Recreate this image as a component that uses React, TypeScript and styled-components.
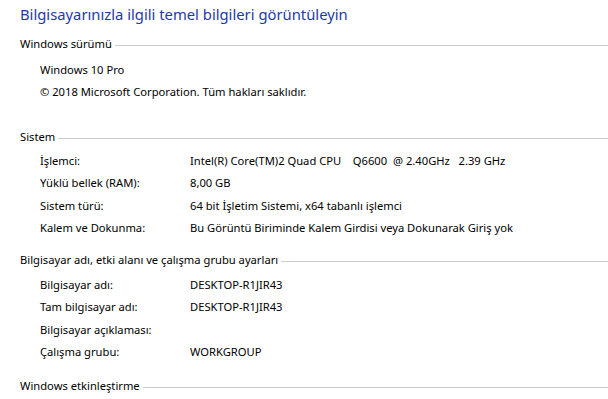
import React from "react";
import styled, { createGlobalStyle } from "styled-components";

const Global = createGlobalStyle`
  html, body { margin: 0; padding: 0; background: #ffffff; }
  body { font-family: "Noto Sans", "Open Sans", sans-serif; }
`;

const Page = styled.div`
  width: 608px;
  height: 399px;
  overflow: hidden;
  box-sizing: border-box;
  padding: 4px 0 0 20px;
  background: #fff;
  color: #000;
  font-family: "Noto Sans", sans-serif;
  font-size: 11.2px;
`;

const Title = styled.h1`
  margin: 0;
  height: 20px;
  line-height: 20px;
  font-size: 14.8px;
  font-weight: 400;
  color: #1e3aa8;
  white-space: nowrap;
`;

const Section = styled.section<{ $top: number }>`
  margin-top: ${(p) => p.$top}px;
`;

const Header = styled.div`
  display: flex;
  align-items: center;
  gap: 3px;
  height: 20px;
  line-height: 20px;
  white-space: nowrap;
`;

const Rule = styled.div`
  flex: 1;
  height: 1px;
  margin-top: 2px;
  background: #cccccc;
`;

const Rows = styled.div<{ $top: number }>`
  margin-top: ${(p) => p.$top}px;
  padding-left: 20px;
  display: grid;
  grid-template-columns: 150px 1fr;
  grid-auto-rows: 22.5px;
  align-items: center;
  white-space: pre;
`;

const Single = styled.div`
  grid-column: 1 / span 2;
`;

const Label = styled.div``;
const Value = styled.div``;

type Row = [string, string];

const system: Row[] = [
  ["İşlemci:", "Intel(R) Core(TM)2 Quad CPU    Q6600  @ 2.40GHz   2.39 GHz"],
  ["Yüklü bellek (RAM):", "8,00 GB"],
  ["Sistem türü:", "64 bit İşletim Sistemi, x64 tabanlı işlemci"],
  ["Kalem ve Dokunma:", "Bu Görüntü Biriminde Kalem Girdisi veya Dokunarak Giriş yok"],
];

const computer: Row[] = [
  ["Bilgisayar adı:", "DESKTOP-R1JIR43"],
  ["Tam bilgisayar adı:", "DESKTOP-R1JIR43"],
  ["Bilgisayar açıklaması:", ""],
  ["Çalışma grubu:", "WORKGROUP"],
];

function SectionHeader({ children }: { children: React.ReactNode }) {
  return (
    <Header>
      <span>{children}</span>
      <Rule />
    </Header>
  );
}

function KeyValueRows({ rows, top }: { rows: Row[]; top: number }) {
  return (
    <Rows $top={top}>
      {rows.map(([k, v]) => (
        <React.Fragment key={k}>
          <Label>{k}</Label>
          <Value>{v}</Value>
        </React.Fragment>
      ))}
    </Rows>
  );
}

export default function App() {
  return (
    <>
      <Global />
      <Page>
        <Title>Bilgisayarınızla ilgili temel bilgileri görüntüleyin</Title>
        <Section $top={10}>
          <SectionHeader>Windows sürümü</SectionHeader>
          <Rows $top={4}>
            <Single>Windows 10 Pro</Single>
            <Single>© 2018 Microsoft Corporation. Tüm hakları saklıdır.</Single>
          </Rows>
        </Section>
        <Section $top={24}>
          <SectionHeader>Sistem</SectionHeader>
          <KeyValueRows rows={system} top={2} />
        </Section>
        <Section $top={11}>
          <SectionHeader>Bilgisayar adı, etki alanı ve çalışma grubu ayarları</SectionHeader>
          <KeyValueRows rows={computer} top={3} />
        </Section>
        <Section $top={13}>
          <SectionHeader>Windows etkinleştirme</SectionHeader>
        </Section>
      </Page>
    </>
  );
}
